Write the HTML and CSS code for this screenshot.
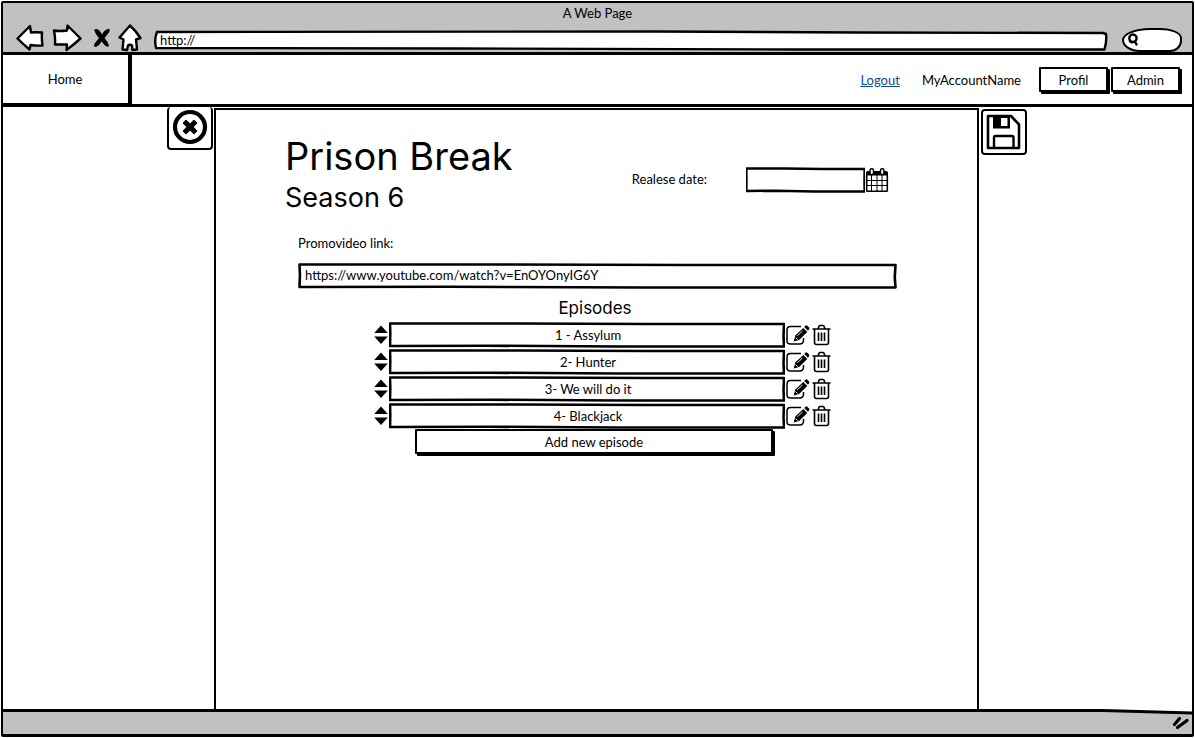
FILE: index.html
```
<!DOCTYPE html>
<html lang="en">
<head>
<meta charset="utf-8">
<meta name="viewport" content="width=device-width, initial-scale=1">
<title>A Web Page</title>
<link rel="stylesheet" href="styles.css">
</head>
<body>
<svg class="symbols" aria-hidden="true">
  <symbol id="i-sort" viewBox="0 0 14 20"><path d="M7 .5 13.800 8H.2ZM.2 11.500H13.800L7 19Z"/></symbol>
  <symbol id="i-edit" viewBox="0 0 24 22"><path d="M15.500 2.500H5Q1.500 2.500 1.500 6V17Q1.500 20 5 20H14Q18 20 18 16V14" fill="none" stroke="#000" stroke-width="1.500"/><path d="M8.200 17.500 9.800 11.500 17.800 3.900 21.800 8 13.600 16Z M18.700 3 20.200 1.600Q21 1 21.800 1.700L23.600 3.500Q24.300 4.300 23.600 5.200L22.500 6.700Z"/><path d="M11.800 11.800 17 7M10 13.500 12.200 15.700" fill="none" stroke="#fff" stroke-width=".9"/></symbol>
  <symbol id="i-trash" viewBox="0 0 20 22"><path d="M.5 5H18.500M6 5 7 2.300Q7.300 1.500 8 1.500H11Q11.700 1.500 12 2.300L13 5M2.500 5V18.500Q2.500 20.500 4.500 20.500H14.500Q16.500 20.500 16.500 18.500V5M6.500 8.500V17M9.500 8.500V17M12.500 8.500V17" fill="none" stroke="#000" stroke-width="1.600"/></symbol>
</svg>
<div class="window">
  <header class="chrome">
    <div class="chrome-title">A Web Page</div>
    <div class="toolbar">
      <button class="tool" type="button" aria-label="Back"><svg width="28" height="28" viewBox="0 0 28 28"><path class="line" d="M1.500 14.500 14 2 15 8.500Q20 8 26 8.500 25.500 15 26.500 21.500 20 22 14.500 21L13.500 25.500Q7 20 1.500 14.500Z"/></svg></button>
      <button class="tool tool-forward" type="button" aria-label="Forward"><svg width="30" height="28" viewBox="0 0 30 28"><path class="line" d="M28.500 14.500 15.500 1.500 15 6.500Q8 7.500 2 6.500 3.500 14 3 20.500 9 20.500 15 20.500L14.500 26Q22 20.500 28.500 14.500Z"/></svg></button>
      <button class="tool tool-stop" type="button" aria-label="Stop"><svg width="18" height="20" viewBox="0 0 18 20"><path d="M4 1Q7 2 9 6.500 11.500 1.500 15.500 .7 18 1.500 15.500 5L11.500 10Q14.500 13 16 18 14.500 19.500 12 17.500L8.500 13.500Q6 18 2.500 19 -.3 18.500 2 15L6 10Q2 5.500 1.300 2 2 .5 4 1Z"/></svg></button>
      <button class="tool" type="button" aria-label="Start page"><svg width="24" height="28" viewBox="0 0 24 28"><path class="line" d="M12 1.500 1.500 13.500 5.500 15.500 4.500 25.500 9 26 10 21.500Q12 20 14 21.500L14.500 26 19 25.500 18 15.500 22.500 14Q18 7 12 1.500Z"/></svg></button>
      <input class="url" type="text" value="http://" aria-label="Address">
      <label class="search"><svg width="13" height="14" viewBox="0 0 13 14"><path class="line" d="M7 1.500A3.700 3.700 0 1 1 6.900 1.500M9 8.500 10.500 11.500M4 8.500 6 9.500"/></svg><input type="text" aria-label="Search"></label>
    </div>
  </header>
  <nav class="nav">
    <button class="home" type="button">Home</button>
    <a class="logout" href="#">Logout</a>
    <span class="account">MyAccountName</span>
    <div class="nav-buttons">
      <button class="btn" type="button">Profil</button>
      <button class="btn" type="button">Admin</button>
    </div>
  </nav>
  <main class="page">
    <div class="side side-left"><button class="icon-btn" type="button" aria-label="Close"><svg width="36" height="36" viewBox="0 0 36 36"><circle cx="18" cy="18" r="15" fill="none" stroke="#000" stroke-width="4.200"/><path d="M14 11.500 18 15.500 22 11.500 24.500 14 20.600 18 24.500 22 22 24.500 18 20.500 14 24.500 11.500 22 15.400 18 11.500 14Z" stroke="#000" stroke-width="1.500" stroke-linejoin="round"/></svg></button></div>
    <section class="panel">
      <div class="heading">
        <div>
          <h1>Prison Break</h1>
          <h2>Season 6</h2>
        </div>
        <div class="release">
          <label for="date">Realese date:</label>
          <input id="date" class="box date" type="text">
          <button class="tool" type="button" aria-label="Pick a date"><svg width="24" height="26" viewBox="0 0 24 26"><path d="M1 8V5.500Q1 4 3 4H21Q23 4 23 5.500V8.500H1Z"/><path d="M1.700 8V23.500Q1.700 24.200 2.500 24.200H21.500Q22.300 24.200 22.300 23.500V8" fill="none" stroke="#000" stroke-width="1.600"/><path d="M6.500 8V24M12 8V24M17 8V24M2 13.500H22M2 18.500H22" fill="none" stroke="#000"/><rect x="5" y="1.700" width="3.500" height="6" rx="1.700" fill="#fff" stroke="#000" stroke-width="1.500"/><rect x="15.500" y="1.700" width="3.500" height="6" rx="1.700" fill="#fff" stroke="#000" stroke-width="1.500"/></svg></button>
        </div>
      </div>
      <label class="promo-label" for="promo">Promovideo link:</label>
      <input id="promo" class="box promo" type="text" value="https://www.youtube.com/watch?v=EnOYOnyIG6Y">
      <h3>Episodes</h3>
      <ul class="episodes">
        <li><button class="tool" type="button" aria-label="Move"><svg width="16" height="20"><use href="#i-sort"/></svg></button><input class="box" type="text" value="1 - Assylum" aria-label="Episode 1"><button class="tool" type="button" aria-label="Edit"><svg width="25" height="22"><use href="#i-edit"/></svg></button><button class="tool tool-delete" type="button" aria-label="Delete"><svg width="20" height="22"><use href="#i-trash"/></svg></button></li>
        <li><button class="tool" type="button" aria-label="Move"><svg width="16" height="20"><use href="#i-sort"/></svg></button><input class="box" type="text" value="2- Hunter" aria-label="Episode 2"><button class="tool" type="button" aria-label="Edit"><svg width="25" height="22"><use href="#i-edit"/></svg></button><button class="tool tool-delete" type="button" aria-label="Delete"><svg width="20" height="22"><use href="#i-trash"/></svg></button></li>
        <li><button class="tool" type="button" aria-label="Move"><svg width="16" height="20"><use href="#i-sort"/></svg></button><input class="box" type="text" value="3- We will do it" aria-label="Episode 3"><button class="tool" type="button" aria-label="Edit"><svg width="25" height="22"><use href="#i-edit"/></svg></button><button class="tool tool-delete" type="button" aria-label="Delete"><svg width="20" height="22"><use href="#i-trash"/></svg></button></li>
        <li><button class="tool" type="button" aria-label="Move"><svg width="16" height="20"><use href="#i-sort"/></svg></button><input class="box" type="text" value="4- Blackjack" aria-label="Episode 4"><button class="tool" type="button" aria-label="Edit"><svg width="25" height="22"><use href="#i-edit"/></svg></button><button class="tool tool-delete" type="button" aria-label="Delete"><svg width="20" height="22"><use href="#i-trash"/></svg></button></li>
      </ul>
      <div class="add-row"><button class="btn add" type="button">Add new episode</button></div>
    </section>
    <div class="side side-right"><button class="icon-btn" type="button" aria-label="Save"><svg width="36" height="36" viewBox="0 0 36 36"><path d="M2 2H25L33 10.500V34H2Z" fill="none" stroke="#000" stroke-width="2.600" stroke-linejoin="round"/><path d="M7 2H24V14.500H7Z"/><path d="M15 4H21.500V12H15Z" fill="#fff"/><path d="M8 34V23.500Q8 22 9.500 22H26Q27.500 22 27.500 23.500V34" fill="none" stroke="#000" stroke-width="2.400"/></svg></button></div>
  </main>
  <footer class="status"><svg width="18" height="16" viewBox="0 0 18 16"><path d="M2.500 10.500 7.500 4.500M5.500 13.500 15 6.500" fill="none" stroke="#000" stroke-width="3.200" stroke-linecap="round"/></svg></footer>
</div>
</body>
</html>
```
FILE: styles.css
```
* { box-sizing: border-box; }

body {
  margin: 0;
  padding: 1px;
  background: #fff;
  color: #000;
  font: 13px/18px Lato, "Noto Sans", sans-serif;
}

button, input { font: inherit; color: inherit; margin: 0; }
svg { display: block; }
h1, h2, h3 { margin: 0; font-weight: 400; font-family: Inter, Lato, sans-serif; }

.symbols { position: absolute; width: 0; height: 0; }
.line { fill: #fff; stroke: #000; stroke-width: 2.4; stroke-linejoin: round; stroke-linecap: round; }
.tool { flex: none; padding: 0; border: 0; background: none; }

.window {
  display: flex;
  flex-direction: column;
  min-height: calc(100vh - 2px);
  border: solid #000;
  border-width: 2px 2px 3px;
  border-radius: 2px;
}

.chrome { background: #c1c1c1; border-bottom: 3px solid #000; }
.chrome-title { height: 20px; text-align: center; line-height: 21px; }
.toolbar { display: flex; align-items: center; height: 29px; padding: 0 10px 0 13px; }
.tool-forward { margin-left: 8px; }
.tool-stop { margin: 0 7px 0 11px; }

/* Hand-drawn frames: stretched outlines with uneven edges */
.url {
  flex: 1;
  min-width: 0;
  height: 21px;
  margin: 5px 14px 0 12px;
  padding: 0 6px 1px;
  border: 0;
  background: url("data:image/svg+xml,%3Csvg xmlns='http://www.w3.org/2000/svg' viewBox='0 0 950 21' preserveAspectRatio='none'%3E%3Cpath d='M3 2 Q0 9 2 18 L300 18.500 640 19.500 946.500 19.500 Q949 11 948 4 L945 3 700 2.500 500 1.500Z' fill='%23fff' stroke='%23000' stroke-width='2.400' stroke-linejoin='round' vector-effect='non-scaling-stroke'/%3E%3C/svg%3E") 0 0 / 100% 100% no-repeat;
}

.search {
  display: flex;
  align-items: center;
  width: 60px;
  height: 24px;
  margin-top: 5px;
  padding-left: 2px;
  border: 2px solid #000;
  border-radius: 28px 22px 12px 18px / 12px 10px 11px 12px;
  background: #fff;
}
.search input { width: 36px; padding: 0; border: 0; background: none; }

.nav { display: flex; align-items: center; height: 52px; padding-right: 11px; border-bottom: 3px solid #000; }
.home {
  align-self: stretch;
  width: 129px;
  margin-right: auto;
  padding: 0 1px 0 0;
  border: solid #000;
  border-width: 0 4px 1px 0;
  background: #fff;
}
.logout { color: #0b4a8f; }
.account { margin: 0 18px 0 22px; }
.nav-buttons { display: flex; gap: 2px; }

.btn {
  width: 69px;
  height: 25px;
  margin-right: 1px;
  padding: 0;
  border: 2px solid #000;
  border-radius: 1px;
  background: #fff;
  box-shadow: 2px 2px 0 #000;
}

.page { flex: 1; display: grid; grid-template-columns: 211fr 765fr 213fr; }
.side-left { padding: 0 1px; }
.side-right { padding: 2px; }
.side-left .icon-btn { margin-left: auto; }
.icon-btn {
  display: grid;
  place-items: center;
  width: 46px;
  height: 46px;
  padding: 0;
  border: 2px solid #000;
  border-radius: 4px;
  background: #fff;
}
.side-left .icon-btn { height: 43px; padding-bottom: 2px; border-top: 0; }

.panel { margin-top: 1px; padding: 22px 80px 24px 82px; border: solid #000; border-width: 2px 2px 0; }
.heading { display: flex; justify-content: space-between; margin: 0 8px 0 -13px; }
h1 { font-size: 38px; line-height: 48px; }
h2 { font-size: 27px; line-height: 36px; }
.release { display: flex; align-items: center; height: 26px; margin-top: 35px; }
.release label { padding-bottom: 2px; }

.box {
  width: 100%;
  min-width: 0;
  height: 26px;
  padding: 0 7px 2px;
  border: 0;
  background: url("data:image/svg+xml,%3Csvg xmlns='http://www.w3.org/2000/svg' viewBox='0 0 400 26' preserveAspectRatio='none'%3E%3Cpath d='M1 1.500 130 1.500 260 2 399 2 398.500 14 399 24.500 230 24.500 100 23.700 1 24 1.300 12Z' fill='%23fff' stroke='%23000' stroke-width='2.600' stroke-linejoin='round' vector-effect='non-scaling-stroke'/%3E%3C/svg%3E") 0 0 / 100% 100% no-repeat;
}
.date { width: 119px; margin-left: 39px; }
.date, .release label { flex: none; }
.promo-label { display: block; margin-top: 18px; }
.promo { display: block; margin-top: 11px; }
h3 { margin-top: 7px; padding-right: 5px; font-size: 17px; line-height: 24px; text-align: center; }

.episodes {
  display: grid;
  gap: 1px;
  max-width: 469px;
  margin: 2px auto 0;
  padding: 0 0 0 10px;
  list-style: none;
}
.episodes li { display: flex; align-items: center; }
.episodes .box { padding: 0 5px 0 7px; text-align: center; }
.tool-delete { margin-left: 2px; }
.add-row { padding: 0 7px 0 0; }
.add { display: block; width: 100%; max-width: 358px; margin: 0 auto; }

.status {
  display: flex;
  justify-content: flex-end;
  align-items: center;
  height: 25px;
  padding-right: 2px;
  background: url("data:image/svg+xml,%3Csvg xmlns='http://www.w3.org/2000/svg' viewBox='0 0 1189 25' preserveAspectRatio='none'%3E%3Cpath d='M0 1.500H1100L1189 4.500V25H0Z' fill='%23c1c1c1'/%3E%3Cpath d='M0 1.500H1100L1189 4' fill='none' stroke='%23000' stroke-width='3' vector-effect='non-scaling-stroke'/%3E%3C/svg%3E") 0 0 / 100% 100% no-repeat;
}
```
